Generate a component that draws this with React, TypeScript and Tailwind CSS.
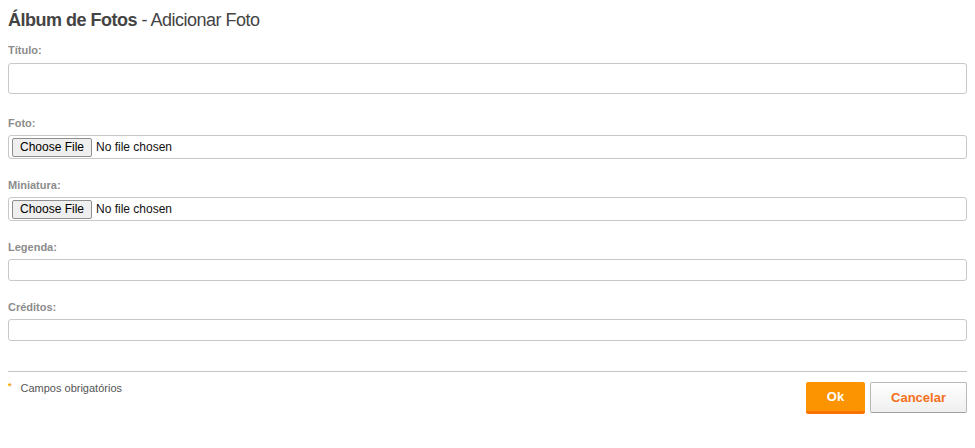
export default function App() {
  return (
    <div className="min-h-screen bg-white px-2 pt-[9px] font-['Liberation_Sans',Arial,sans-serif] text-[#444]">
      <h1 className="text-[18px] leading-[22px] tracking-[-0.5px] text-[#444]">
        <span className="font-bold">Álbum de Fotos</span> - Adicionar Foto
      </h1>

      <form className="mt-[13px] flex flex-col">
        <Label text="Título:" />
        <div className="mt-[6px] h-[31px] rounded-[3px] border border-[#c8c8c8]" />

        <Label text="Foto:" className="mt-[23px]" />
        <FileBox />

        <Label text="Miniatura:" className="mt-[20px]" />
        <FileBox />

        <Label text="Legenda:" className="mt-[20px]" />
        <div className="mt-[5px] h-[22px] rounded-[3px] border border-[#c8c8c8]" />

        <Label text="Créditos:" className="mt-[20px]" />
        <div className="mt-[5px] h-[22px] rounded-[3px] border border-[#c8c8c8]" />

        <div className="mt-[30px] border-t border-[#c4c4c4]" />

        <div className="mt-[10px] flex items-start justify-between">
          <div className="-mt-[2px] flex items-start gap-[9px] text-[11px] leading-[16px] text-[#555]">
            <span className="mt-[-2px] text-[9px] font-bold text-[#f7a300]">*</span>
            Campos obrigatórios
          </div>
          <div className="flex gap-[5px]">
            <button
              type="button"
              className="h-[32px] w-[59px] rounded-[2px] border-b-[3px] border-[#f97300] bg-[#fb9400] text-[13px] font-bold text-white"
            >
              Ok
            </button>
            <button
              type="button"
              className="h-[31px] w-[97px] rounded-[2px] border border-[#b9b9b9] border-b-[#a0a0a0] bg-gradient-to-b from-white to-[#efefef] text-[13px] font-bold text-[#f5701a]"
            >
              Cancelar
            </button>
          </div>
        </div>
      </form>
    </div>
  );
}

function Label({ text, className = "" }: { text: string; className?: string }) {
  return (
    <label className={`text-[11px] font-bold leading-[13px] text-[#8c8c8c] ${className}`}>
      {text}
    </label>
  );
}

function FileBox() {
  return (
    <div className="mt-[5px] flex h-[24px] items-center rounded-[3px] border border-[#c8c8c8] pl-[3px] text-[12px] text-[#111]">
      <span className="flex h-[19px] w-[80px] items-center justify-center rounded-[2px] border border-[#8f8f8f] bg-[#efefef] text-black">
        Choose File
      </span>
      <span className="ml-[4px]">No file chosen</span>
    </div>
  );
}
